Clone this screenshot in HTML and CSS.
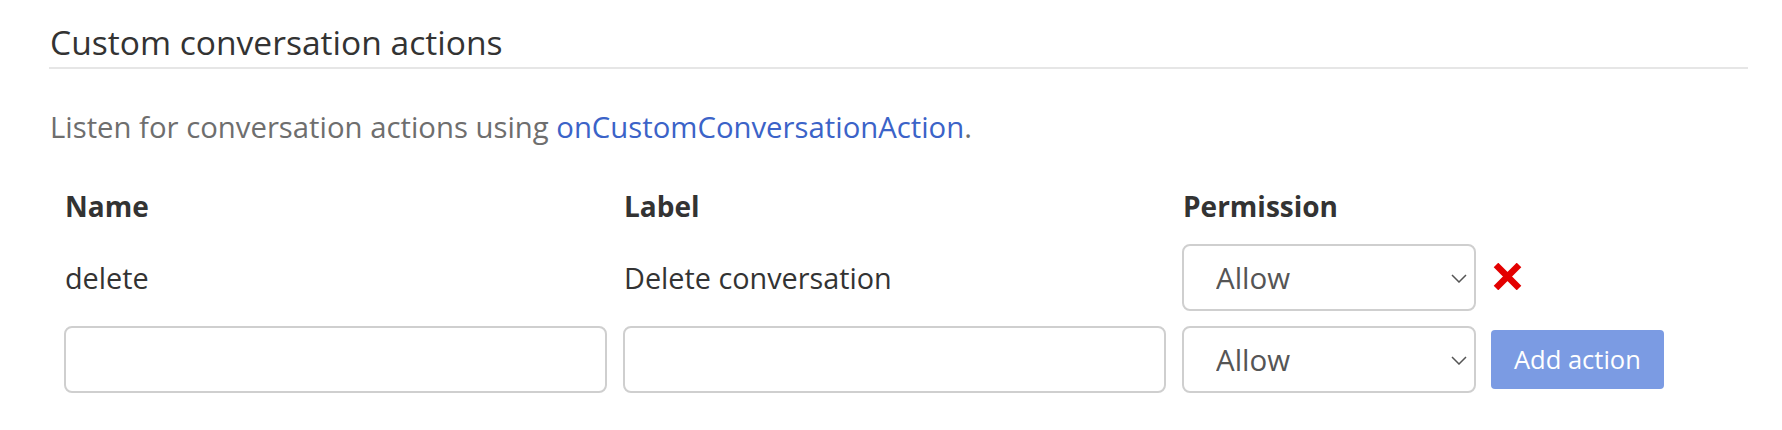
FILE: index.html
```html
<!DOCTYPE html>
<html lang="en">
<head>
<meta charset="utf-8">
<title>Custom conversation actions</title>
<link rel="stylesheet" href="styles.css">
</head>
<body>
<div class="section">
  <h2 class="title">Custom conversation actions</h2>
  <p class="intro">Listen for conversation actions using <a class="link" href="#">onCustomConversationAction</a>.</p>
  <div class="actions">
    <div class="th">Name</div>
    <div class="th">Label</div>
    <div class="th">Permission</div>
    <div class="th"></div>

    <div class="td">delete</div>
    <div class="td">Delete conversation</div>
    <div class="td">
      <div class="select-wrap">
        <select class="select"><option>Allow</option><option>Deny</option></select>
        <svg class="chevron" width="16" height="9" viewBox="0 0 16 9"><path d="M1 1 L8 8 L15 1" fill="none" stroke="#555" stroke-width="1.5"/></svg>
      </div>
    </div>
    <div class="td">
      <svg class="remove" width="29" height="27" viewBox="0 0 29 27"><path d="M3 2 L26 25 M26 2 L3 25" stroke="#e30000" stroke-width="6.5" fill="none"/></svg>
    </div>

    <div class="td"><input class="input" type="text"></div>
    <div class="td"><input class="input" type="text"></div>
    <div class="td">
      <div class="select-wrap">
        <select class="select"><option>Allow</option><option>Deny</option></select>
        <svg class="chevron" width="16" height="9" viewBox="0 0 16 9"><path d="M1 1 L8 8 L15 1" fill="none" stroke="#555" stroke-width="1.5"/></svg>
      </div>
    </div>
    <div class="td"><button class="btn" type="button">Add action</button></div>
  </div>
</div>
</body>
</html>
```
FILE: styles.css
```css
html, body {
  margin: 0;
  padding: 0;
  background: #ffffff;
}

body {
  font-family: "Open Sans", "Liberation Sans", sans-serif;
  color: #333333;
}

.section {
  width: 1699px;
  padding: 20px 0 0 49px;
}

.title {
  margin: 0;
  padding: 0 0 2px 1px;
  font-size: 33.6px;
  font-weight: 400;
  line-height: 45px;
  color: #333333;
  border-bottom: 2px solid #e6e6e6;
}

.intro {
  margin: 39px 0 0 1px;
  font-size: 29.3px;
  line-height: 39px;
  color: #6e6e6e;
}

.link {
  color: #3b63c8;
  text-decoration: none;
}

.actions {
  display: grid;
  grid-template-columns: 543px 543px 294px auto;
  column-gap: 16px;
  row-gap: 15px;
  margin: 40px 0 0 15px;
  align-items: center;
}

.th {
  font-size: 28px;
  font-weight: 700;
  line-height: 38px;
  color: #333333;
  padding-left: 1px;
  margin-bottom: 4px;
}

.td {
  font-size: 28.8px;
  line-height: 38px;
  color: #333333;
  padding-left: 1px;
  display: flex;
  align-items: center;
}

.input {
  box-sizing: border-box;
  width: 543px;
  height: 67px;
  margin-left: -1px;
  border: 2px solid #cfcfcf;
  border-radius: 8px;
  background: #ffffff;
  font-family: inherit;
  font-size: 28px;
  padding: 0 20px;
  outline: none;
}

.select-wrap {
  position: relative;
  width: 294px;
  height: 67px;
  margin-left: -1px;
}

.select {
  appearance: none;
  -webkit-appearance: none;
  box-sizing: border-box;
  width: 294px;
  height: 67px;
  border: 2px solid #cfcfcf;
  border-radius: 8px;
  background: #ffffff;
  font-family: inherit;
  font-size: 29.5px;
  color: #555555;
  padding: 0 0 0 32px;
  outline: none;
}

.chevron {
  position: absolute;
  right: 9px;
  top: 30px;
  pointer-events: none;
}

.remove {
  display: block;
  margin-top: -3px;
}

.btn {
  box-sizing: border-box;
  height: 59px;
  padding: 0 23px;
  margin-left: -2px;
  border: none;
  border-radius: 4px;
  background: #7b9be3;
  color: #ffffff;
  font-family: inherit;
  font-size: 25.5px;
  line-height: 59px;
}
```
